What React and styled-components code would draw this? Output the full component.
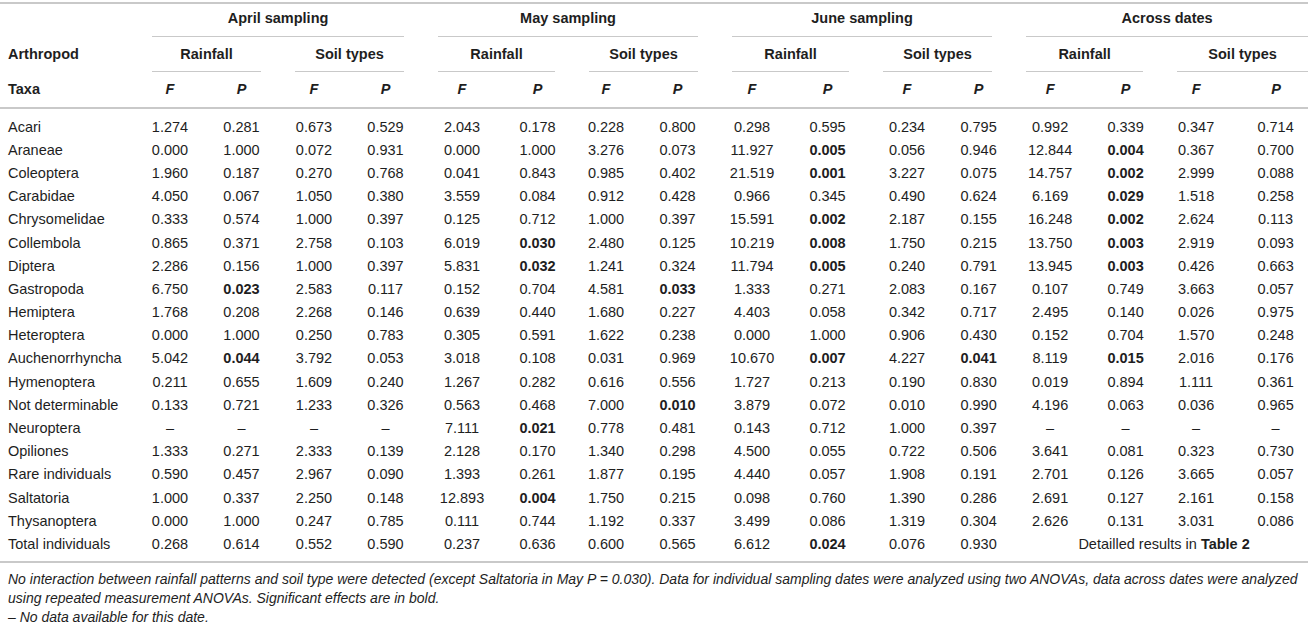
import React from "react";
import styled, { createGlobalStyle } from "styled-components";

const GlobalStyle = createGlobalStyle`
  body {
    margin: 0;
    background: #fff;
    font-family: "Liberation Sans", Arial, sans-serif;
    color: #1e1e1e;
  }
`;

const LINE = "#c9c9c9";

// column widths, measured off the screenshot
const COLS = [135, 70, 73, 72, 71, 82, 69, 68, 75, 74, 77, 82, 61, 82, 69, 72, 76];

const GROUPS = ["April sampling", "May sampling", "June sampling", "Across dates"];

// "*" marks a significant (bold) value
const ROWS = [
  ["Acari", "1.274 0.281 0.673 0.529 2.043 0.178 0.228 0.800 0.298 0.595 0.234 0.795 0.992 0.339 0.347 0.714"],
  ["Araneae", "0.000 1.000 0.072 0.931 0.000 1.000 3.276 0.073 11.927 *0.005 0.056 0.946 12.844 *0.004 0.367 0.700"],
  ["Coleoptera", "1.960 0.187 0.270 0.768 0.041 0.843 0.985 0.402 21.519 *0.001 3.227 0.075 14.757 *0.002 2.999 0.088"],
  ["Carabidae", "4.050 0.067 1.050 0.380 3.559 0.084 0.912 0.428 0.966 0.345 0.490 0.624 6.169 *0.029 1.518 0.258"],
  ["Chrysomelidae", "0.333 0.574 1.000 0.397 0.125 0.712 1.000 0.397 15.591 *0.002 2.187 0.155 16.248 *0.002 2.624 0.113"],
  ["Collembola", "0.865 0.371 2.758 0.103 6.019 *0.030 2.480 0.125 10.219 *0.008 1.750 0.215 13.750 *0.003 2.919 0.093"],
  ["Diptera", "2.286 0.156 1.000 0.397 5.831 *0.032 1.241 0.324 11.794 *0.005 0.240 0.791 13.945 *0.003 0.426 0.663"],
  ["Gastropoda", "6.750 *0.023 2.583 0.117 0.152 0.704 4.581 *0.033 1.333 0.271 2.083 0.167 0.107 0.749 3.663 0.057"],
  ["Hemiptera", "1.768 0.208 2.268 0.146 0.639 0.440 1.680 0.227 4.403 0.058 0.342 0.717 2.495 0.140 0.026 0.975"],
  ["Heteroptera", "0.000 1.000 0.250 0.783 0.305 0.591 1.622 0.238 0.000 1.000 0.906 0.430 0.152 0.704 1.570 0.248"],
  ["Auchenorrhyncha", "5.042 *0.044 3.792 0.053 3.018 0.108 0.031 0.969 10.670 *0.007 4.227 *0.041 8.119 *0.015 2.016 0.176"],
  ["Hymenoptera", "0.211 0.655 1.609 0.240 1.267 0.282 0.616 0.556 1.727 0.213 0.190 0.830 0.019 0.894 1.111 0.361"],
  ["Not determinable", "0.133 0.721 1.233 0.326 0.563 0.468 7.000 *0.010 3.879 0.072 0.010 0.990 4.196 0.063 0.036 0.965"],
  ["Neuroptera", "– – – – 7.111 *0.021 0.778 0.481 0.143 0.712 1.000 0.397 – – – –"],
  ["Opiliones", "1.333 0.271 2.333 0.139 2.128 0.170 1.340 0.298 4.500 0.055 0.722 0.506 3.641 0.081 0.323 0.730"],
  ["Rare individuals", "0.590 0.457 2.967 0.090 1.393 0.261 1.877 0.195 4.440 0.057 1.908 0.191 2.701 0.126 3.665 0.057"],
  ["Saltatoria", "1.000 0.337 2.250 0.148 12.893 *0.004 1.750 0.215 0.098 0.760 1.390 0.286 2.691 0.127 2.161 0.158"],
  ["Thysanoptera", "0.000 1.000 0.247 0.785 0.111 0.744 1.192 0.337 3.499 0.086 1.319 0.304 2.626 0.131 3.031 0.086"],
];

const TOTAL = "0.268 0.614 0.552 0.590 0.237 0.636 0.600 0.565 6.612 *0.024 0.076 0.930";

const Page = styled.div`
  padding-top: 2px;
  width: 1308px;
`;

const Table = styled.table`
  width: 1308px;
  table-layout: fixed;
  border-collapse: separate;
  border-spacing: 0;
  font-size: 14.5px;
  line-height: 20px;
`;

const Col = styled.col`
  width: ${(p) => p.$w}px;
`;

const TopRow = styled.tr`
  th {
    border-top: 2px solid ${LINE};
  }
`;

const LastHeadRow = styled.tr`
  th {
    border-bottom: 2px solid ${LINE};
  }
`;

const HeadCell = styled.th`
  padding: 0 ${(p) => (p.$edge ? 0 : 17)}px 0 17px;
  font-weight: 700;
  text-align: center;
  vertical-align: bottom;
`;

const Rule = styled.div`
  padding: ${(p) => (p.$top ? "4px 0 8px" : "7px 0 7px")};
  border-bottom: 1px solid ${LINE};
`;

const LabelHead = styled.th`
  padding: 7px 0 8px 8px;
  text-align: left;
  font-weight: 700;
  vertical-align: bottom;
`;

const StatHead = styled.th`
  padding: 7px 0 8px;
  text-align: center;
  font-weight: 700;
  font-style: italic;

  &:last-child {
    padding-left: 12px;
  }
`;

const BodyRow = styled.tr`
  td {
    padding-top: ${(p) => (p.$first ? 7.6 : 1.6)}px;
    padding-bottom: ${(p) => (p.$last ? 7.1 : 1.6)}px;
    border-bottom: ${(p) => (p.$last ? `2px solid ${LINE}` : "none")};
  }
`;

const LabelCell = styled.td`
  padding-left: 8px;
  text-align: left;
  white-space: nowrap;
`;

const ValueCell = styled.td`
  text-align: center;
  font-weight: ${(p) => (p.$bold ? 700 : 400)};
  white-space: nowrap;

  &:last-child {
    padding-left: 12px;
  }
`;

const Notes = styled.div`
  padding: 7px 0 0 8px;
  font-size: 14px;
  line-height: 19px;
  font-style: italic;
`;

const Note = styled.p`
  margin: 0;
  white-space: nowrap;
`;

function Values({ line }) {
  return line.split(" ").map((v, i) => {
    const bold = v.startsWith("*");
    return (
      <ValueCell key={i} $bold={bold}>
        {bold ? v.slice(1) : v}
      </ValueCell>
    );
  });
}

export default function App() {
  return (
    <Page>
      <GlobalStyle />
      <Table>
        <colgroup>
          {COLS.map((w, i) => (
            <Col key={i} $w={w} />
          ))}
        </colgroup>
        <thead>
          <TopRow>
            <th />
            {GROUPS.map((g, i) => (
              <HeadCell key={g} colSpan={4} $edge={i === GROUPS.length - 1}>
                <Rule $top>{g}</Rule>
              </HeadCell>
            ))}
          </TopRow>
          <tr>
            <LabelHead>Arthropod</LabelHead>
            {GROUPS.flatMap((g, i) =>
              ["Rainfall", "Soil types"].map((s, j) => (
                <HeadCell key={g + s} colSpan={2} $edge={i === 3 && j === 1}>
                  <Rule>{s}</Rule>
                </HeadCell>
              ))
            )}
          </tr>
          <LastHeadRow>
            <LabelHead>Taxa</LabelHead>
            {Array.from({ length: 16 }, (_, i) => (
              <StatHead key={i}>{i % 2 ? "P" : "F"}</StatHead>
            ))}
          </LastHeadRow>
        </thead>
        <tbody>
          {ROWS.map(([name, line], i) => (
            <BodyRow key={name} $first={i === 0}>
              <LabelCell>{name}</LabelCell>
              <Values line={line} />
            </BodyRow>
          ))}
          <BodyRow $last>
            <LabelCell>Total individuals</LabelCell>
            <Values line={TOTAL} />
            <ValueCell colSpan={4}>
              Detailled results in <b>Table 2</b>
            </ValueCell>
          </BodyRow>
        </tbody>
      </Table>
      <Notes>
        <Note>
          No interaction between rainfall patterns and soil type were detected (except Saltatoria in May P = 0.030). Data for individual
          sampling dates were analyzed using two ANOVAs, data across dates were analyzed
        </Note>
        <Note>using repeated measurement ANOVAs. Significant effects are in bold.</Note>
        <Note>– No data available for this date.</Note>
      </Notes>
    </Page>
  );
}
